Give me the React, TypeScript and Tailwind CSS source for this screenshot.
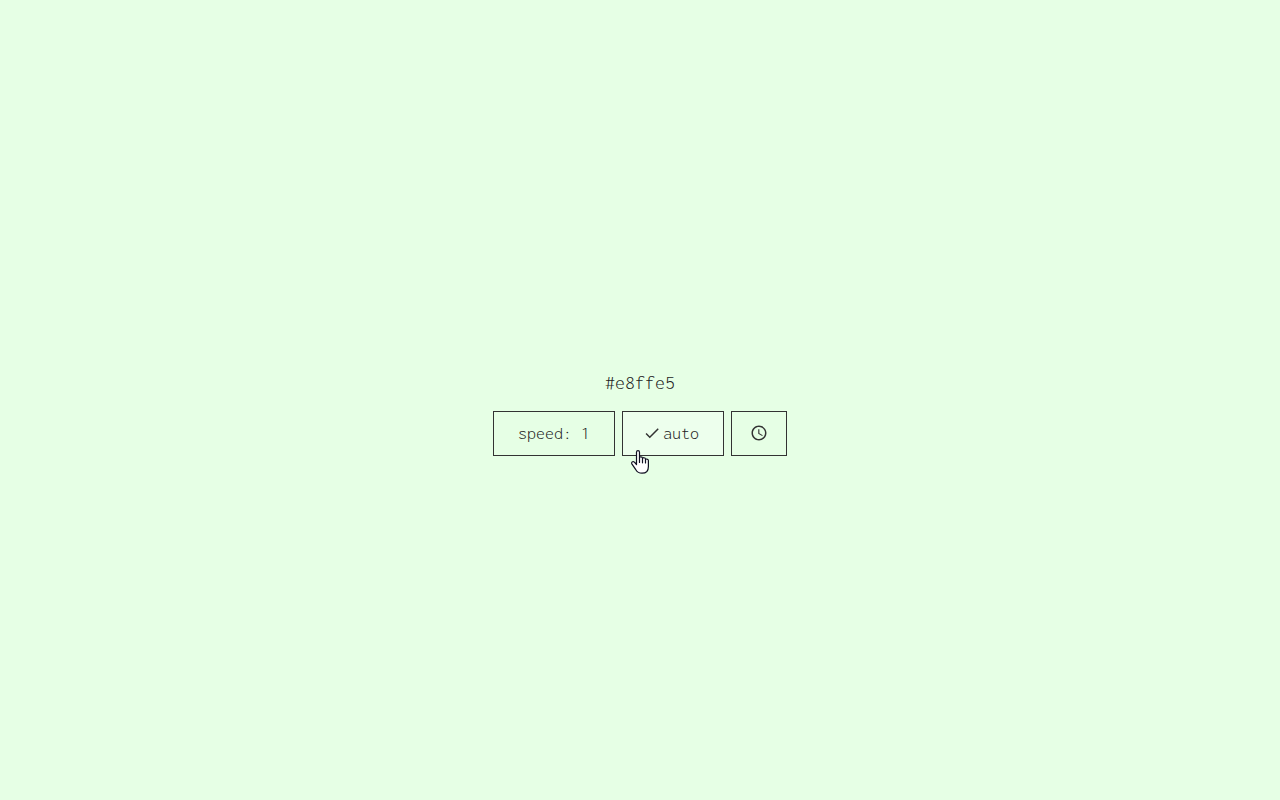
import { useState } from "react";
import { MdAccessTime, MdCheck } from "react-icons/md";

const buttonStyle = "h-[45px] flex items-center justify-center border border-[#333333] text-[18px] cursor-pointer hover:bg-white/30";

function HandCursor() {
	return (
		<svg className="absolute left-2 top-[38px] pointer-events-none" width="20" height="25" viewBox="0 0 20 25" aria-hidden="true">
			<path
				d="M5.5 14.5V2.2C5.5 0.2 8.5 0.2 8.5 2.2V8C8.5 6.4 11.5 6.5 11.5 8.3V8.8C11.5 7.2 14.5 7.4 14.5 9.2V9.8C14.5 8.6 17.4 8.7 17.4 10.6V16.4C17.4 20.6 14.8 23.2 11 23.2C8 23.2 6.2 22 4.8 19.7L1 14.1C0 12.2 1.8 10.8 3.4 12.1Z"
				fill="white"
				stroke="#111122"
				strokeWidth="1.2"
				strokeLinejoin="round"
			/>
			<path d="M8.5 8V12.5M11.5 9V12.8M14.5 10V13" fill="none" stroke="#111122" strokeWidth="1.2" strokeLinecap="round" />
		</svg>
	);
}

function App() {
	const [speed, setSpeed] = useState(1);
	const [isAuto, setIsAuto] = useState(true);
	const [showClock, setShowClock] = useState(false);

	return (
		<main className="min-h-screen pt-[27px] flex flex-col items-center justify-center bg-[#e6ffe5] text-[#222222] font-['Inconsolata','Liberation_Mono',monospace] font-light">
			<h1 className="mb-4 text-[20px] leading-6 font-light">{showClock ? new Date().toLocaleTimeString() : "#e8ffe5"}</h1>
			<div className="flex gap-[7px]">
				<button onClick={() => setSpeed(speed === 5 ? 1 : speed + 1)} className={`${buttonStyle} px-6`}>
					speed: {speed}
				</button>
				<button onClick={() => setIsAuto(!isAuto)} aria-pressed={isAuto} className={`${buttonStyle} relative pl-5 pr-6 bg-white/30`}>
					{isAuto && <MdCheck size={18} className="mb-0.5 mr-0.5 text-[#333333]" />}
					auto
					<HandCursor />
				</button>
				<button onClick={() => setShowClock(!showClock)} aria-label="clock" className={`${buttonStyle} px-[18px]`}>
					<MdAccessTime size={18} className="mb-0.5 text-[#333333]" />
				</button>
			</div>
		</main>
	);
}

export default App;
